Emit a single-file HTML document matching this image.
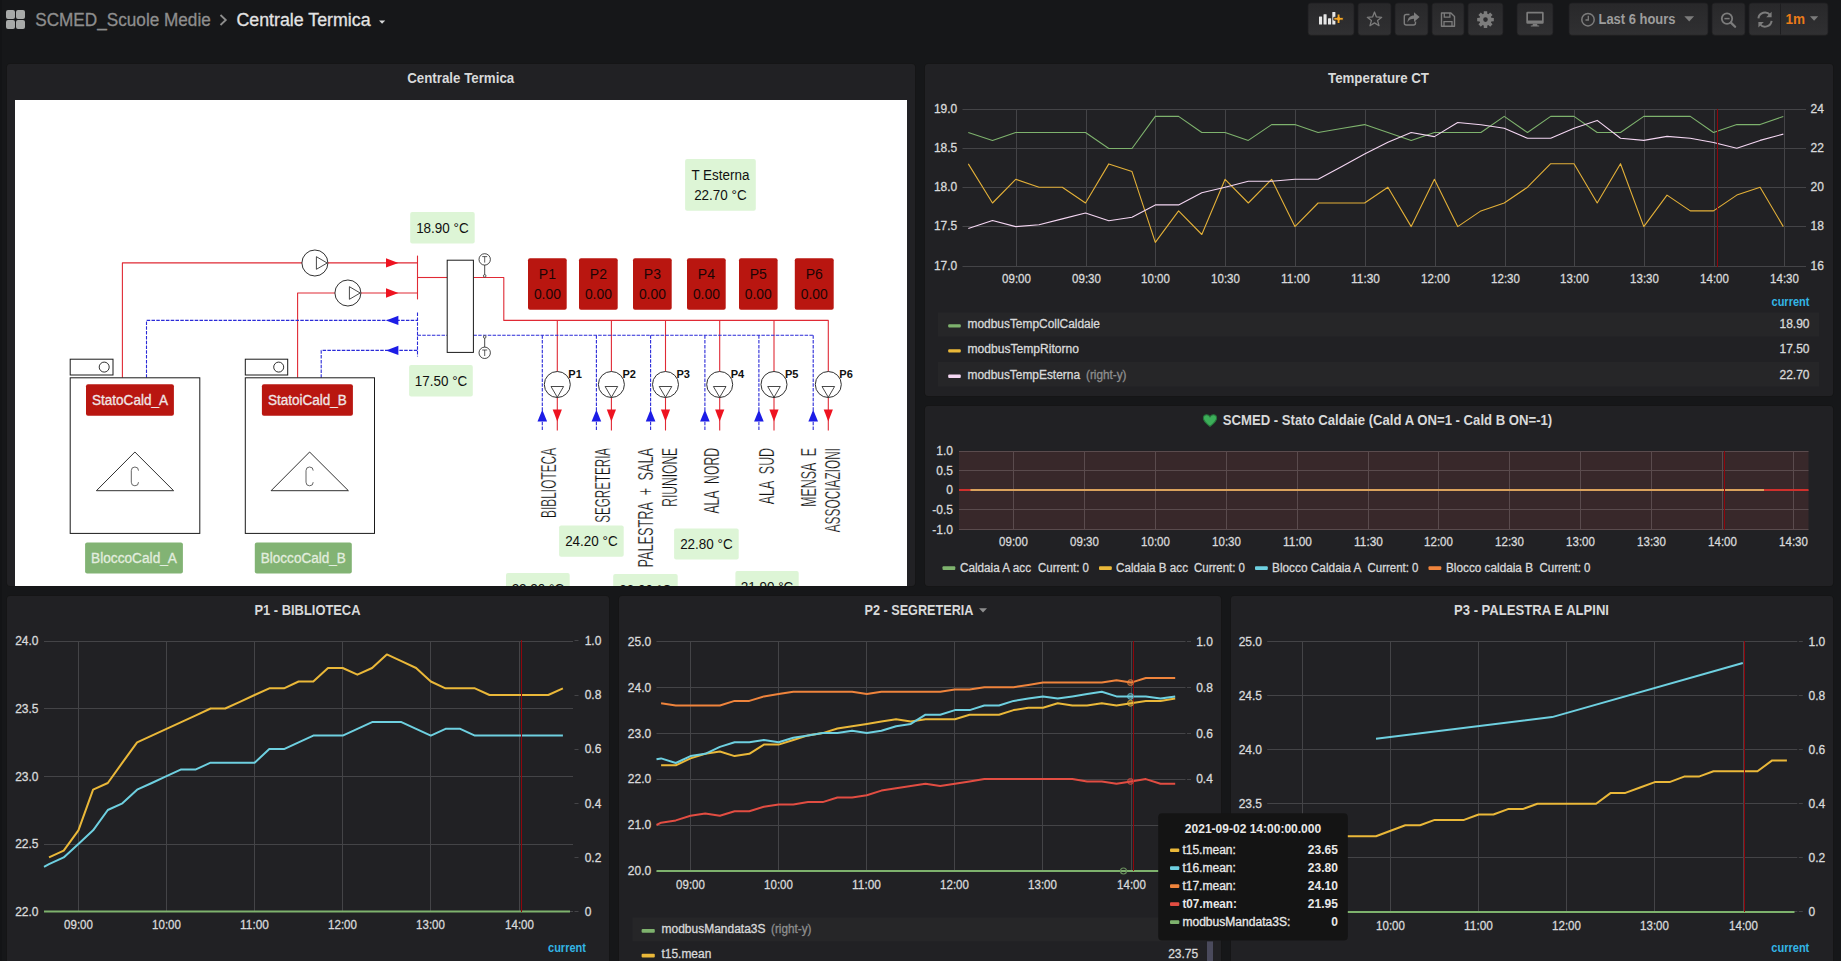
<!DOCTYPE html>
<html><head><meta charset="utf-8"><title>Centrale Termica - Grafana</title>
<style>html,body{margin:0;padding:0;background:#161719;overflow:hidden}svg{display:block}text{font-family:"Liberation Sans",sans-serif}</style>
</head><body>
<svg width="1841" height="961" viewBox="0 0 1841 961">
<rect width="1841" height="961" fill="#161719"/>
<defs><clipPath id="scclip"><rect x="15" y="100" width="892" height="486"/></clipPath></defs>
<rect x="0.0" y="0.0" width="2.0" height="961.0" fill="#131416" />
<rect x="6.0" y="10.0" width="9.0" height="8.9" fill="#a7a9a8" rx="2" />
<rect x="16.0" y="10.0" width="9.0" height="8.9" fill="#a7a9a8" rx="2" />
<rect x="6.0" y="20.0" width="9.0" height="8.9" fill="#a7a9a8" rx="2" />
<rect x="16.0" y="20.0" width="9.0" height="8.9" fill="#a7a9a8" rx="2" />
<text x="35.2" y="25.8" font-size="18" fill="#8e8e8e" textLength="175.6" lengthAdjust="spacingAndGlyphs" stroke="#8e8e8e" stroke-width="0.3" >SCMED_Scuole Medie</text>
<path d="M220.5 15 L225.8 20 L220.5 25" fill="none" stroke="#8e8e8e" stroke-width="1.8"/>
<text x="236.4" y="25.8" font-size="18" fill="#e3e3e3" textLength="134.2" lengthAdjust="spacingAndGlyphs" stroke="#e3e3e3" stroke-width="0.3" >Centrale Termica</text>
<path d="M379 20.6 L385.2 20.6 L382.1 23.8 Z" fill="#d8d9da"/>
<defs><linearGradient id="bg" x1="0" y1="0" x2="0" y2="1"><stop offset="0" stop-color="#28282a"/><stop offset="1" stop-color="#303032"/></linearGradient></defs>
<rect x="1308.0" y="3.0" width="46.0" height="32.3" fill="url(#bg)" rx="3" stroke="#1f1f21" stroke-width="0.8"/>
<rect x="1358.0" y="3.0" width="33.0" height="32.3" fill="url(#bg)" rx="3" stroke="#1f1f21" stroke-width="0.8"/>
<rect x="1395.0" y="3.0" width="33.0" height="32.3" fill="url(#bg)" rx="3" stroke="#1f1f21" stroke-width="0.8"/>
<rect x="1432.0" y="3.0" width="32.0" height="32.3" fill="url(#bg)" rx="3" stroke="#1f1f21" stroke-width="0.8"/>
<rect x="1468.0" y="3.0" width="35.0" height="32.3" fill="url(#bg)" rx="3" stroke="#1f1f21" stroke-width="0.8"/>
<rect x="1517.0" y="3.0" width="36.0" height="32.3" fill="url(#bg)" rx="3" stroke="#1f1f21" stroke-width="0.8"/>
<rect x="1569.0" y="3.0" width="139.0" height="32.3" fill="url(#bg)" rx="3" stroke="#1f1f21" stroke-width="0.8"/>
<rect x="1712.0" y="3.0" width="33.0" height="32.3" fill="url(#bg)" rx="3" stroke="#1f1f21" stroke-width="0.8"/>
<rect x="1749.0" y="3.0" width="79.0" height="32.3" fill="url(#bg)" rx="3" stroke="#1f1f21" stroke-width="0.8"/>
<line x1="1780.5" y1="3.5" x2="1780.5" y2="34.5" stroke="#1e1e20" stroke-width="1" />
<rect x="1319.0" y="16.6" width="3.1" height="8.0" fill="#e6e6e6" rx="0.5" />
<rect x="1323.5" y="14.2" width="3.1" height="10.4" fill="#e6e6e6" rx="0.5" />
<rect x="1328.0" y="18.3" width="3.1" height="6.3" fill="#e6e6e6" rx="0.5" />
<rect x="1332.3" y="12.0" width="3.1" height="12.6" fill="#e6e6e6" rx="0.5" />
<path d="M1333.8 17.3 h3.3 v-3.3 h2.9 v3.3 h3.3 v2.9 h-3.3 v3.3 h-2.9 v-3.3 h-3.3 z" fill="#f5a623" stroke="#29292b" stroke-width="1"/>
<polygon points="1374.5,12.0 1376.4,16.9 1381.7,17.3 1377.6,20.6 1379.0,25.7 1374.5,22.9 1370.0,25.7 1371.4,20.6 1367.3,17.3 1372.6,16.9" fill="none" stroke="#7c7c7c" stroke-width="1.3" stroke-linejoin="round"/>
<path d="M1409.5 14.5 h-3.2 a2 2 0 0 0 -2 2 v6.5 a2 2 0 0 0 2 2 h7.2 a2 2 0 0 0 2 -2 v-1.5" fill="none" stroke="#7c7c7c" stroke-width="1.4"/>
<path d="M1407.5 22.5 c0.2 -5 2.8 -7 6.5 -7 v-3.3 l5.6 4.9 l-5.6 4.9 v-3.2 c-3 0 -4.9 0.7 -6.5 3.7 z" fill="#7c7c7c"/>
<path d="M1441.5 13 h9.4 l3.6 3.6 v9.6 h-13 z" fill="none" stroke="#7c7c7c" stroke-width="1.4" stroke-linejoin="round"/>
<path d="M1444.3 13 v4.2 h5.6 v-4.2" fill="none" stroke="#7c7c7c" stroke-width="1.3"/>
<path d="M1444 26.2 v-4.6 h8 v4.6" fill="none" stroke="#7c7c7c" stroke-width="1.3"/>
<path d="M1483.70 13.77 L1483.81 11.27 L1487.19 11.27 L1487.30 13.77 L1488.35 14.20 L1490.20 12.52 L1492.58 14.90 L1490.90 16.75 L1491.33 17.80 L1493.83 17.91 L1493.83 21.29 L1491.33 21.40 L1490.90 22.45 L1492.58 24.30 L1490.20 26.68 L1488.35 25.00 L1487.30 25.43 L1487.19 27.93 L1483.81 27.93 L1483.70 25.43 L1482.65 25.00 L1480.80 26.68 L1478.42 24.30 L1480.10 22.45 L1479.67 21.40 L1477.17 21.29 L1477.17 17.91 L1479.67 17.80 L1480.10 16.75 L1478.42 14.90 L1480.80 12.52 L1482.65 14.20 Z M1487.80 19.60 a2.3 2.3 0 1 0 -4.6 0 a2.3 2.3 0 1 0 4.6 0 Z" fill="#7c7c7c" fill-rule="evenodd"/>
<path d="M1527.5 11.8 h15 a1.2 1.2 0 0 1 1.2 1.2 v9.6 a1.2 1.2 0 0 1 -1.2 1.2 h-15 a1.2 1.2 0 0 1 -1.2 -1.2 v-9.6 a1.2 1.2 0 0 1 1.2 -1.2 z M1528 13.6 v7 h14 v-7 z" fill="#7c7c7c" fill-rule="evenodd"/>
<path d="M1533 23.8 h4 l0.6 1.6 h1.6 v1 h-8.4 v-1 h1.6 z" fill="#7c7c7c"/>
<circle cx="1588" cy="19.7" r="6.2" fill="none" stroke="#7c7c7c" stroke-width="1.5"/>
<path d="M1588.3 15.8 v4.2 h-2.8" fill="none" stroke="#7c7c7c" stroke-width="1.3"/>
<text x="1598.5" y="24.0" font-size="14" fill="#9d9d9d" font-weight="bold" textLength="77.0" lengthAdjust="spacingAndGlyphs" >Last 6 hours</text>
<path d="M1684.3 16.2 h9.8 l-4.9 5.2 z" fill="#7c7c7c"/>
<circle cx="1727" cy="18.6" r="5.2" fill="none" stroke="#7c7c7c" stroke-width="1.8"/>
<path d="M1724.4 18.6 h5.2" stroke="#7c7c7c" stroke-width="1.5"/>
<path d="M1730.9 22.6 l4.2 4.2" stroke="#7c7c7c" stroke-width="2.3" stroke-linecap="round"/>
<path d="M1758.4 18.4 a6.6 6.6 0 0 1 11.8 -3.2" fill="none" stroke="#7c7c7c" stroke-width="2"/>
<path d="M1771.6 11.8 v5.4 h-5.4 z" fill="#7c7c7c"/>
<path d="M1771.6 20.8 a6.6 6.6 0 0 1 -11.8 3.2" fill="none" stroke="#7c7c7c" stroke-width="2"/>
<path d="M1758.4 27.4 v-5.4 h5.4 z" fill="#7c7c7c"/>
<text x="1785.6" y="24.0" font-size="14" fill="#eb7b18" font-weight="bold" textLength="19.5" lengthAdjust="spacingAndGlyphs" >1m</text>
<path d="M1810 16.2 h8.2 l-4.1 4.6 z" fill="#7c7c7c"/>
<rect x="6.5" y="63.5" width="909" height="523" rx="3.5" fill="#141414"/>
<rect x="7.0" y="64.0" width="908.0" height="522.0" fill="#212124" rx="3" />
<rect x="924.5" y="63.5" width="909" height="333" rx="3.5" fill="#141414"/>
<rect x="925.0" y="64.0" width="908.0" height="332.0" fill="#212124" rx="3" />
<rect x="924.5" y="405.5" width="909" height="181" rx="3.5" fill="#141414"/>
<rect x="925.0" y="406.0" width="908.0" height="180.0" fill="#212124" rx="3" />
<rect x="6.5" y="595.5" width="603" height="385" rx="3.5" fill="#141414"/>
<rect x="7.0" y="596.0" width="602.0" height="384.0" fill="#212124" rx="3" />
<rect x="618.5" y="595.5" width="603" height="385" rx="3.5" fill="#141414"/>
<rect x="619.0" y="596.0" width="602.0" height="384.0" fill="#212124" rx="3" />
<rect x="1230.5" y="595.5" width="603" height="385" rx="3.5" fill="#141414"/>
<rect x="1231.0" y="596.0" width="602.0" height="384.0" fill="#212124" rx="3" />
<text x="460.7" y="83.3" font-size="14" fill="#d8d9da" text-anchor="middle" font-weight="bold" textLength="107.0" lengthAdjust="spacingAndGlyphs" >Centrale Termica</text>
<text x="1378.5" y="83.3" font-size="14" fill="#d8d9da" text-anchor="middle" font-weight="bold" textLength="101.0" lengthAdjust="spacingAndGlyphs" >Temperature CT</text>
<g clip-path="url(#scclip)">
<rect x="15.0" y="100.0" width="892.0" height="486.0" fill="#ffffff" />
<polyline points="122.4,377.8 122.4,262.9 417.5,262.9" fill="none" stroke="#e02a35" stroke-width="1.1" stroke-linejoin="round" stroke-linejoin="miter"/>
<polyline points="297.6,377.8 297.6,293.0 417.5,293.0" fill="none" stroke="#e02a35" stroke-width="1.1" stroke-linejoin="round" stroke-linejoin="miter"/>
<polyline points="417.5,255.6 417.5,299.4" fill="none" stroke="#e02a35" stroke-width="1.1" stroke-linejoin="round" stroke-linejoin="miter"/>
<polyline points="417.5,277.5 447.2,277.5" fill="none" stroke="#e02a35" stroke-width="1.1" stroke-linejoin="round" stroke-linejoin="miter"/>
<polyline points="473.4,277.5 503.8,277.5 503.8,320.4 828.3,320.4 828.3,371.5" fill="none" stroke="#e02a35" stroke-width="1.1" stroke-linejoin="round" stroke-linejoin="miter"/>
<polyline points="557.3,320.4 557.3,371.5" fill="none" stroke="#e02a35" stroke-width="1.1" stroke-linejoin="round" stroke-linejoin="miter"/>
<polyline points="611.4,320.4 611.4,371.5" fill="none" stroke="#e02a35" stroke-width="1.1" stroke-linejoin="round" stroke-linejoin="miter"/>
<polyline points="665.5,320.4 665.5,371.5" fill="none" stroke="#e02a35" stroke-width="1.1" stroke-linejoin="round" stroke-linejoin="miter"/>
<polyline points="719.7,320.4 719.7,371.5" fill="none" stroke="#e02a35" stroke-width="1.1" stroke-linejoin="round" stroke-linejoin="miter"/>
<polyline points="774.0,320.4 774.0,371.5" fill="none" stroke="#e02a35" stroke-width="1.1" stroke-linejoin="round" stroke-linejoin="miter"/>
<polyline points="557.3,397.5 557.3,430.5" fill="none" stroke="#e02a35" stroke-width="1.1" stroke-linejoin="round" stroke-linejoin="miter"/>
<path d="M552.7 409.6 h9.2 l-4.6 11.8 z" fill="#ee1320"/>
<polyline points="611.4,397.5 611.4,430.5" fill="none" stroke="#e02a35" stroke-width="1.1" stroke-linejoin="round" stroke-linejoin="miter"/>
<path d="M606.8 409.6 h9.2 l-4.6 11.8 z" fill="#ee1320"/>
<polyline points="665.5,397.5 665.5,430.5" fill="none" stroke="#e02a35" stroke-width="1.1" stroke-linejoin="round" stroke-linejoin="miter"/>
<path d="M660.9 409.6 h9.2 l-4.6 11.8 z" fill="#ee1320"/>
<polyline points="719.7,397.5 719.7,430.5" fill="none" stroke="#e02a35" stroke-width="1.1" stroke-linejoin="round" stroke-linejoin="miter"/>
<path d="M715.1 409.6 h9.2 l-4.6 11.8 z" fill="#ee1320"/>
<polyline points="774.0,397.5 774.0,430.5" fill="none" stroke="#e02a35" stroke-width="1.1" stroke-linejoin="round" stroke-linejoin="miter"/>
<path d="M769.4 409.6 h9.2 l-4.6 11.8 z" fill="#ee1320"/>
<polyline points="828.3,397.5 828.3,430.5" fill="none" stroke="#e02a35" stroke-width="1.1" stroke-linejoin="round" stroke-linejoin="miter"/>
<path d="M823.7 409.6 h9.2 l-4.6 11.8 z" fill="#ee1320"/>
<path d="M386 258.2 v9.4 l12.4 -4.7 z" fill="#ee1320"/>
<path d="M386 288.3 v9.4 l12.4 -4.7 z" fill="#ee1320"/>
<polyline points="146.5,377.8 146.5,320.4 417.5,320.4" fill="none" stroke="#2a2ad8" stroke-width="1.1" stroke-linejoin="round" stroke-dasharray="3.5 1.3" stroke-linejoin="miter"/>
<polyline points="321.2,377.8 321.2,350.4 417.5,350.4" fill="none" stroke="#2a2ad8" stroke-width="1.1" stroke-linejoin="round" stroke-dasharray="3.5 1.3" stroke-linejoin="miter"/>
<polyline points="417.5,312.6 417.5,356.6" fill="none" stroke="#2a2ad8" stroke-width="1.1" stroke-linejoin="round" stroke-dasharray="3.5 1.3" stroke-linejoin="miter"/>
<polyline points="417.5,335.3 447.2,335.3" fill="none" stroke="#2a2ad8" stroke-width="1.1" stroke-linejoin="round" stroke-dasharray="3.5 1.3" stroke-linejoin="miter"/>
<polyline points="473.4,335.3 813.2,335.3" fill="none" stroke="#2a2ad8" stroke-width="1.1" stroke-linejoin="round" stroke-dasharray="3.5 1.3" stroke-linejoin="miter"/>
<polyline points="542.3,335.3 542.3,430.5" fill="none" stroke="#2a2ad8" stroke-width="1.1" stroke-linejoin="round" stroke-dasharray="3.5 1.3" stroke-linejoin="miter"/>
<path d="M542.3 409.8 l4.8 11.8 h-9.6 z" fill="#1c1ce6"/>
<polyline points="596.4,335.3 596.4,430.5" fill="none" stroke="#2a2ad8" stroke-width="1.1" stroke-linejoin="round" stroke-dasharray="3.5 1.3" stroke-linejoin="miter"/>
<path d="M596.4 409.8 l4.8 11.8 h-9.6 z" fill="#1c1ce6"/>
<polyline points="650.6,335.3 650.6,430.5" fill="none" stroke="#2a2ad8" stroke-width="1.1" stroke-linejoin="round" stroke-dasharray="3.5 1.3" stroke-linejoin="miter"/>
<path d="M650.6 409.8 l4.8 11.8 h-9.6 z" fill="#1c1ce6"/>
<polyline points="704.9,335.3 704.9,430.5" fill="none" stroke="#2a2ad8" stroke-width="1.1" stroke-linejoin="round" stroke-dasharray="3.5 1.3" stroke-linejoin="miter"/>
<path d="M704.9 409.8 l4.8 11.8 h-9.6 z" fill="#1c1ce6"/>
<polyline points="758.9,335.3 758.9,430.5" fill="none" stroke="#2a2ad8" stroke-width="1.1" stroke-linejoin="round" stroke-dasharray="3.5 1.3" stroke-linejoin="miter"/>
<path d="M758.9 409.8 l4.8 11.8 h-9.6 z" fill="#1c1ce6"/>
<polyline points="813.2,335.3 813.2,430.5" fill="none" stroke="#2a2ad8" stroke-width="1.1" stroke-linejoin="round" stroke-dasharray="3.5 1.3" stroke-linejoin="miter"/>
<path d="M813.2 409.8 l4.8 11.8 h-9.6 z" fill="#1c1ce6"/>
<path d="M398.4 315.7 v9.4 l-12.4 -4.7 z" fill="#1c1ce6"/>
<path d="M398.4 345.7 v9.4 l-12.4 -4.7 z" fill="#1c1ce6"/>
<circle cx="314.9" cy="263" r="13" fill="#fff" stroke="#1a1a1a" stroke-width="0.9"/>
<path d="M316.4 256.7 v12.6 l10.8 -6.3 z" fill="none" stroke="#1a1a1a" stroke-width="0.8"/>
<circle cx="347.9" cy="293" r="13" fill="#fff" stroke="#1a1a1a" stroke-width="0.9"/>
<path d="M349.4 286.7 v12.6 l10.8 -6.3 z" fill="none" stroke="#1a1a1a" stroke-width="0.8"/>
<circle cx="557.3" cy="384.5" r="13" fill="#fff" stroke="#1a1a1a" stroke-width="0.9"/>
<path d="M551.0 386.5 h12.6 l-6.3 10.8 z" fill="none" stroke="#1a1a1a" stroke-width="0.8"/>
<text x="568.3" y="377.6" font-size="10" fill="#111" font-weight="bold" textLength="13.5" lengthAdjust="spacingAndGlyphs" >P1</text>
<circle cx="611.4" cy="384.5" r="13" fill="#fff" stroke="#1a1a1a" stroke-width="0.9"/>
<path d="M605.1 386.5 h12.6 l-6.3 10.8 z" fill="none" stroke="#1a1a1a" stroke-width="0.8"/>
<text x="622.4" y="377.6" font-size="10" fill="#111" font-weight="bold" textLength="13.5" lengthAdjust="spacingAndGlyphs" >P2</text>
<circle cx="665.5" cy="384.5" r="13" fill="#fff" stroke="#1a1a1a" stroke-width="0.9"/>
<path d="M659.2 386.5 h12.6 l-6.3 10.8 z" fill="none" stroke="#1a1a1a" stroke-width="0.8"/>
<text x="676.5" y="377.6" font-size="10" fill="#111" font-weight="bold" textLength="13.5" lengthAdjust="spacingAndGlyphs" >P3</text>
<circle cx="719.7" cy="384.5" r="13" fill="#fff" stroke="#1a1a1a" stroke-width="0.9"/>
<path d="M713.4 386.5 h12.6 l-6.3 10.8 z" fill="none" stroke="#1a1a1a" stroke-width="0.8"/>
<text x="730.7" y="377.6" font-size="10" fill="#111" font-weight="bold" textLength="13.5" lengthAdjust="spacingAndGlyphs" >P4</text>
<circle cx="774.0" cy="384.5" r="13" fill="#fff" stroke="#1a1a1a" stroke-width="0.9"/>
<path d="M767.7 386.5 h12.6 l-6.3 10.8 z" fill="none" stroke="#1a1a1a" stroke-width="0.8"/>
<text x="785.0" y="377.6" font-size="10" fill="#111" font-weight="bold" textLength="13.5" lengthAdjust="spacingAndGlyphs" >P5</text>
<circle cx="828.3" cy="384.5" r="13" fill="#fff" stroke="#1a1a1a" stroke-width="0.9"/>
<path d="M822.0 386.5 h12.6 l-6.3 10.8 z" fill="none" stroke="#1a1a1a" stroke-width="0.8"/>
<text x="839.3" y="377.6" font-size="10" fill="#111" font-weight="bold" textLength="13.5" lengthAdjust="spacingAndGlyphs" >P6</text>
<rect x="447.2" y="260.2" width="26.2" height="92.2" fill="#fff" stroke="#1a1a1a" stroke-width="1"/>
<circle cx="484.7" cy="259.4" r="5.7" fill="#fff" stroke="#1a1a1a" stroke-width="0.8"/>
<line x1="484.7" y1="265.1" x2="484.7" y2="276.0" stroke="#1a1a1a" stroke-width="0.8" />
<circle cx="484.7" cy="275.9" r="1.3" fill="#fff" stroke="#1a1a1a" stroke-width="0.7"/>
<path d="M482.2 256.6 h5 M484.7 256.6 v6" stroke="#1a1a1a" stroke-width="0.7" fill="none"/>
<circle cx="484.7" cy="352.8" r="5.7" fill="#fff" stroke="#1a1a1a" stroke-width="0.8"/>
<line x1="484.7" y1="347.1" x2="484.7" y2="336.8" stroke="#1a1a1a" stroke-width="0.8" />
<circle cx="484.7" cy="336.9" r="1.3" fill="#fff" stroke="#1a1a1a" stroke-width="0.7"/>
<path d="M482.2 350.0 h5 M484.7 350.0 v6" stroke="#1a1a1a" stroke-width="0.7" fill="none"/>
<rect x="70.2" y="377.8" width="129.6" height="155.6" fill="#fff" stroke="#1a1a1a" stroke-width="1"/>
<rect x="70.2" y="359.2" width="42.8" height="15.8" fill="#fff" stroke="#1a1a1a" stroke-width="1"/>
<circle cx="104.2" cy="367.1" r="5" fill="#fff" stroke="#1a1a1a" stroke-width="0.9"/>
<path d="M134.9 452 L173.6 490.7 H96.4 Z" fill="none" stroke="#1a1a1a" stroke-width="0.9"/>
<path d="M138.5 470.6 a3.6 3.6 0 0 0 -7.2 0 v11.6 a3.6 3.6 0 0 0 7.2 0" fill="none" stroke="#555" stroke-width="0.9"/>
<rect x="245.3" y="377.8" width="129.2" height="155.6" fill="#fff" stroke="#1a1a1a" stroke-width="1"/>
<rect x="245.3" y="359.2" width="42.4" height="15.8" fill="#fff" stroke="#1a1a1a" stroke-width="1"/>
<circle cx="278.7" cy="367.1" r="5" fill="#fff" stroke="#1a1a1a" stroke-width="0.9"/>
<path d="M309.6 452 L348.4 490.7 H271.1 Z" fill="none" stroke="#1a1a1a" stroke-width="0.9"/>
<path d="M313.2 470.6 a3.6 3.6 0 0 0 -7.2 0 v11.6 a3.6 3.6 0 0 0 7.2 0" fill="none" stroke="#555" stroke-width="0.9"/>
<rect x="86.0" y="384.2" width="87.9" height="31.5" fill="#b91610" rx="2" />
<text x="130.0" y="404.8" font-size="14" fill="#f0e6e6" text-anchor="middle" textLength="76.0" lengthAdjust="spacingAndGlyphs" stroke="#f0e6e6" stroke-width="0.3" >StatoCald_A</text>
<rect x="261.9" y="384.2" width="91.0" height="31.5" fill="#b91610" rx="2" />
<text x="307.4" y="404.8" font-size="14" fill="#f0e6e6" text-anchor="middle" textLength="79.0" lengthAdjust="spacingAndGlyphs" stroke="#f0e6e6" stroke-width="0.3" >StatoiCald_B</text>
<rect x="85.1" y="542.4" width="97.8" height="31.2" fill="#82b374" rx="2" />
<text x="134.0" y="562.8" font-size="14" fill="#e2eddf" text-anchor="middle" textLength="86.0" lengthAdjust="spacingAndGlyphs" stroke="#e2eddf" stroke-width="0.3" >BloccoCald_A</text>
<rect x="254.8" y="542.4" width="97.0" height="31.2" fill="#82b374" rx="2" />
<text x="303.3" y="562.8" font-size="14" fill="#e2eddf" text-anchor="middle" textLength="85.0" lengthAdjust="spacingAndGlyphs" stroke="#e2eddf" stroke-width="0.3" >BloccoCald_B</text>
<rect x="528.0" y="258.3" width="38.7" height="51.4" fill="#b91610" rx="2" />
<text x="547.4" y="278.8" font-size="14" fill="#1b0505" text-anchor="middle" >P1</text>
<text x="547.4" y="299.0" font-size="14" fill="#1b0505" text-anchor="middle" textLength="27.0" lengthAdjust="spacingAndGlyphs" >0.00</text>
<rect x="579.0" y="258.3" width="38.7" height="51.4" fill="#b91610" rx="2" />
<text x="598.4" y="278.8" font-size="14" fill="#1b0505" text-anchor="middle" >P2</text>
<text x="598.4" y="299.0" font-size="14" fill="#1b0505" text-anchor="middle" textLength="27.0" lengthAdjust="spacingAndGlyphs" >0.00</text>
<rect x="633.0" y="258.3" width="38.7" height="51.4" fill="#b91610" rx="2" />
<text x="652.4" y="278.8" font-size="14" fill="#1b0505" text-anchor="middle" >P3</text>
<text x="652.4" y="299.0" font-size="14" fill="#1b0505" text-anchor="middle" textLength="27.0" lengthAdjust="spacingAndGlyphs" >0.00</text>
<rect x="687.0" y="258.3" width="38.7" height="51.4" fill="#b91610" rx="2" />
<text x="706.4" y="278.8" font-size="14" fill="#1b0505" text-anchor="middle" >P4</text>
<text x="706.4" y="299.0" font-size="14" fill="#1b0505" text-anchor="middle" textLength="27.0" lengthAdjust="spacingAndGlyphs" >0.00</text>
<rect x="739.0" y="258.3" width="38.6" height="51.4" fill="#b91610" rx="2" />
<text x="758.3" y="278.8" font-size="14" fill="#1b0505" text-anchor="middle" >P5</text>
<text x="758.3" y="299.0" font-size="14" fill="#1b0505" text-anchor="middle" textLength="27.0" lengthAdjust="spacingAndGlyphs" >0.00</text>
<rect x="794.8" y="258.3" width="38.9" height="51.4" fill="#b91610" rx="2" />
<text x="814.2" y="278.8" font-size="14" fill="#1b0505" text-anchor="middle" >P6</text>
<text x="814.2" y="299.0" font-size="14" fill="#1b0505" text-anchor="middle" textLength="27.0" lengthAdjust="spacingAndGlyphs" >0.00</text>
<rect x="410.2" y="211.9" width="64.5" height="31.6" fill="#ddf5d6" rx="2" />
<text x="442.4" y="232.7" font-size="14" fill="#111" text-anchor="middle" textLength="52.5" lengthAdjust="spacingAndGlyphs" >18.90 °C</text>
<rect x="409.1" y="365.0" width="63.7" height="31.5" fill="#ddf5d6" rx="2" />
<text x="441.0" y="385.8" font-size="14" fill="#111" text-anchor="middle" textLength="52.5" lengthAdjust="spacingAndGlyphs" >17.50 °C</text>
<rect x="685.1" y="159.0" width="70.7" height="51.7" fill="#ddf5d6" rx="2" />
<text x="720.4" y="180.2" font-size="14" fill="#111" text-anchor="middle" textLength="58.0" lengthAdjust="spacingAndGlyphs" >T Esterna</text>
<text x="720.4" y="200.1" font-size="14" fill="#111" text-anchor="middle" textLength="52.5" lengthAdjust="spacingAndGlyphs" >22.70 °C</text>
<rect x="559.1" y="525.4" width="64.6" height="31.4" fill="#ddf5d6" rx="2" />
<text x="591.4" y="546.1" font-size="14" fill="#111" text-anchor="middle" textLength="52.5" lengthAdjust="spacingAndGlyphs" >24.20 °C</text>
<rect x="674.1" y="528.4" width="64.6" height="31.1" fill="#ddf5d6" rx="2" />
<text x="706.4" y="549.0" font-size="14" fill="#111" text-anchor="middle" textLength="52.5" lengthAdjust="spacingAndGlyphs" >22.80 °C</text>
<rect x="506.0" y="573.0" width="63.7" height="31.5" fill="#ddf5d6" rx="2" />
<text x="537.9" y="593.8" font-size="14" fill="#111" text-anchor="middle" textLength="52.5" lengthAdjust="spacingAndGlyphs" >22.20 °C</text>
<rect x="613.2" y="574.0" width="64.5" height="31.5" fill="#ddf5d6" rx="2" />
<text x="645.5" y="594.8" font-size="14" fill="#111" text-anchor="middle" textLength="52.5" lengthAdjust="spacingAndGlyphs" >23.00 °C</text>
<rect x="735.4" y="571.0" width="63.3" height="31.5" fill="#ddf5d6" rx="2" />
<text x="767.0" y="591.8" font-size="14" fill="#111" text-anchor="middle" textLength="52.5" lengthAdjust="spacingAndGlyphs" >21.90 °C</text>
<text transform="translate(555.7,517.9) rotate(-90)" font-size="22.5" fill="#111" textLength="70.0" lengthAdjust="spacingAndGlyphs" word-spacing="7" stroke="#fff" stroke-width="0.35">BIBLIOTECA</text>
<text transform="translate(610.2,522.7) rotate(-90)" font-size="22.5" fill="#111" textLength="74.8" lengthAdjust="spacingAndGlyphs" word-spacing="7" stroke="#fff" stroke-width="0.35">SEGRETERIA</text>
<text transform="translate(652.8,567.6) rotate(-90)" font-size="22.5" fill="#111" textLength="119.7" lengthAdjust="spacingAndGlyphs" word-spacing="7" stroke="#fff" stroke-width="0.35">PALESTRA + SALA</text>
<text transform="translate(676.7,506.7) rotate(-90)" font-size="22.5" fill="#111" textLength="58.8" lengthAdjust="spacingAndGlyphs" word-spacing="7" stroke="#fff" stroke-width="0.35">RIUNIONE</text>
<text transform="translate(718.9,513.6) rotate(-90)" font-size="22.5" fill="#111" textLength="65.7" lengthAdjust="spacingAndGlyphs" word-spacing="7" stroke="#fff" stroke-width="0.35">ALA NORD</text>
<text transform="translate(773.5,504.3) rotate(-90)" font-size="22.5" fill="#111" textLength="56.4" lengthAdjust="spacingAndGlyphs" word-spacing="7" stroke="#fff" stroke-width="0.35">ALA SUD</text>
<text transform="translate(816.1,506.7) rotate(-90)" font-size="22.5" fill="#111" textLength="58.8" lengthAdjust="spacingAndGlyphs" word-spacing="7" stroke="#fff" stroke-width="0.35">MENSA E</text>
<text transform="translate(839.6,532.3) rotate(-90)" font-size="22.5" fill="#111" textLength="84.4" lengthAdjust="spacingAndGlyphs" word-spacing="7" stroke="#fff" stroke-width="0.35">ASSOCIAZIONI</text>
</g>
<line x1="962.5" y1="109.5" x2="1806.0" y2="109.5" stroke="#444447" stroke-width="1" />
<line x1="962.5" y1="148.5" x2="1806.0" y2="148.5" stroke="#444447" stroke-width="1" />
<line x1="962.5" y1="187.5" x2="1806.0" y2="187.5" stroke="#444447" stroke-width="1" />
<line x1="962.5" y1="226.5" x2="1806.0" y2="226.5" stroke="#444447" stroke-width="1" />
<line x1="962.5" y1="266.5" x2="1806.0" y2="266.5" stroke="#444447" stroke-width="1" />
<line x1="1016.5" y1="109.0" x2="1016.5" y2="267.0" stroke="#444447" stroke-width="1" />
<line x1="1086.5" y1="109.0" x2="1086.5" y2="267.0" stroke="#444447" stroke-width="1" />
<line x1="1155.5" y1="109.0" x2="1155.5" y2="267.0" stroke="#444447" stroke-width="1" />
<line x1="1225.5" y1="109.0" x2="1225.5" y2="267.0" stroke="#444447" stroke-width="1" />
<line x1="1295.5" y1="109.0" x2="1295.5" y2="267.0" stroke="#444447" stroke-width="1" />
<line x1="1365.5" y1="109.0" x2="1365.5" y2="267.0" stroke="#444447" stroke-width="1" />
<line x1="1435.5" y1="109.0" x2="1435.5" y2="267.0" stroke="#444447" stroke-width="1" />
<line x1="1505.5" y1="109.0" x2="1505.5" y2="267.0" stroke="#444447" stroke-width="1" />
<line x1="1574.5" y1="109.0" x2="1574.5" y2="267.0" stroke="#444447" stroke-width="1" />
<line x1="1644.5" y1="109.0" x2="1644.5" y2="267.0" stroke="#444447" stroke-width="1" />
<line x1="1714.5" y1="109.0" x2="1714.5" y2="267.0" stroke="#444447" stroke-width="1" />
<line x1="1784.5" y1="109.0" x2="1784.5" y2="267.0" stroke="#444447" stroke-width="1" />
<text x="957.3" y="112.7" font-size="12" fill="#d8d9da" text-anchor="end" stroke="#d8d9da" stroke-width="0.3" >19.0</text>
<text x="1810.5" y="112.7" font-size="12" fill="#d8d9da" stroke="#d8d9da" stroke-width="0.3" >24</text>
<text x="957.3" y="152.0" font-size="12" fill="#d8d9da" text-anchor="end" stroke="#d8d9da" stroke-width="0.3" >18.5</text>
<text x="1810.5" y="152.0" font-size="12" fill="#d8d9da" stroke="#d8d9da" stroke-width="0.3" >22</text>
<text x="957.3" y="191.0" font-size="12" fill="#d8d9da" text-anchor="end" stroke="#d8d9da" stroke-width="0.3" >18.0</text>
<text x="1810.5" y="191.0" font-size="12" fill="#d8d9da" stroke="#d8d9da" stroke-width="0.3" >20</text>
<text x="957.3" y="229.9" font-size="12" fill="#d8d9da" text-anchor="end" stroke="#d8d9da" stroke-width="0.3" >17.5</text>
<text x="1810.5" y="229.9" font-size="12" fill="#d8d9da" stroke="#d8d9da" stroke-width="0.3" >18</text>
<text x="957.3" y="269.8" font-size="12" fill="#d8d9da" text-anchor="end" stroke="#d8d9da" stroke-width="0.3" >17.0</text>
<text x="1810.5" y="269.8" font-size="12" fill="#d8d9da" stroke="#d8d9da" stroke-width="0.3" >16</text>
<text x="1016.5" y="283.3" font-size="12" fill="#d8d9da" text-anchor="middle" textLength="28.8" lengthAdjust="spacingAndGlyphs" stroke="#d8d9da" stroke-width="0.3" >09:00</text>
<text x="1086.5" y="283.3" font-size="12" fill="#d8d9da" text-anchor="middle" textLength="28.8" lengthAdjust="spacingAndGlyphs" stroke="#d8d9da" stroke-width="0.3" >09:30</text>
<text x="1155.5" y="283.3" font-size="12" fill="#d8d9da" text-anchor="middle" textLength="28.8" lengthAdjust="spacingAndGlyphs" stroke="#d8d9da" stroke-width="0.3" >10:00</text>
<text x="1225.5" y="283.3" font-size="12" fill="#d8d9da" text-anchor="middle" textLength="28.8" lengthAdjust="spacingAndGlyphs" stroke="#d8d9da" stroke-width="0.3" >10:30</text>
<text x="1295.5" y="283.3" font-size="12" fill="#d8d9da" text-anchor="middle" textLength="28.8" lengthAdjust="spacingAndGlyphs" stroke="#d8d9da" stroke-width="0.3" >11:00</text>
<text x="1365.5" y="283.3" font-size="12" fill="#d8d9da" text-anchor="middle" textLength="28.8" lengthAdjust="spacingAndGlyphs" stroke="#d8d9da" stroke-width="0.3" >11:30</text>
<text x="1435.5" y="283.3" font-size="12" fill="#d8d9da" text-anchor="middle" textLength="28.8" lengthAdjust="spacingAndGlyphs" stroke="#d8d9da" stroke-width="0.3" >12:00</text>
<text x="1505.5" y="283.3" font-size="12" fill="#d8d9da" text-anchor="middle" textLength="28.8" lengthAdjust="spacingAndGlyphs" stroke="#d8d9da" stroke-width="0.3" >12:30</text>
<text x="1574.5" y="283.3" font-size="12" fill="#d8d9da" text-anchor="middle" textLength="28.8" lengthAdjust="spacingAndGlyphs" stroke="#d8d9da" stroke-width="0.3" >13:00</text>
<text x="1644.5" y="283.3" font-size="12" fill="#d8d9da" text-anchor="middle" textLength="28.8" lengthAdjust="spacingAndGlyphs" stroke="#d8d9da" stroke-width="0.3" >13:30</text>
<text x="1714.5" y="283.3" font-size="12" fill="#d8d9da" text-anchor="middle" textLength="28.8" lengthAdjust="spacingAndGlyphs" stroke="#d8d9da" stroke-width="0.3" >14:00</text>
<text x="1784.5" y="283.3" font-size="12" fill="#d8d9da" text-anchor="middle" textLength="28.8" lengthAdjust="spacingAndGlyphs" stroke="#d8d9da" stroke-width="0.3" >14:30</text>
<polyline points="968.3,132.5 992.5,140.4 1015.7,132.5 1039.0,132.5 1062.3,132.5 1085.5,132.5 1108.8,148.5 1132.0,148.5 1155.3,116.4 1178.6,116.4 1201.8,132.5 1225.1,132.5 1248.3,140.4 1271.6,124.6 1294.9,124.6 1318.1,132.5 1341.4,128.5 1364.6,124.6 1387.9,132.5 1411.2,140.4 1434.4,132.5 1457.7,132.5 1480.9,132.5 1504.2,116.4 1527.5,132.5 1550.7,116.4 1574.0,116.4 1597.2,132.5 1620.5,132.5 1643.8,116.4 1667.0,116.4 1690.3,116.4 1713.5,132.5 1736.8,124.6 1760.1,124.6 1783.3,116.4" fill="none" stroke="#7eb26d" stroke-width="1.1" stroke-linejoin="round" />
<polyline points="968.3,163.9 992.5,203.0 1015.7,179.3 1039.0,187.2 1062.3,187.2 1085.5,203.0 1108.8,163.9 1132.0,171.6 1155.3,242.4 1178.6,210.9 1201.8,234.5 1225.1,179.3 1248.3,203.0 1271.6,179.3 1294.9,226.6 1318.1,203.0 1341.4,203.0 1364.6,203.0 1387.9,187.2 1411.2,226.6 1434.4,179.3 1457.7,226.6 1480.9,210.9 1504.2,203.0 1527.5,187.2 1550.7,163.7 1574.0,163.7 1597.2,203.0 1620.5,163.7 1643.8,226.6 1667.0,195.1 1690.3,210.9 1713.5,210.9 1736.8,195.1 1760.1,187.2 1783.3,226.6" fill="none" stroke="#e3b038" stroke-width="1.1" stroke-linejoin="round" />
<polyline points="968.3,228.6 992.5,220.5 1015.7,226.6 1039.0,224.7 1062.3,218.9 1085.5,213.0 1108.8,220.7 1132.0,217.2 1155.3,204.9 1178.6,204.9 1201.8,192.8 1225.1,187.2 1248.3,181.2 1271.6,181.2 1294.9,179.3 1318.1,179.3 1341.4,166.8 1364.6,153.9 1387.9,142.3 1411.2,132.5 1434.4,136.6 1457.7,122.5 1480.9,124.8 1504.2,128.3 1527.5,138.3 1550.7,138.3 1574.0,128.3 1597.2,120.4 1620.5,138.3 1643.8,140.4 1667.0,136.4 1690.3,138.3 1713.5,142.5 1736.8,148.3 1760.1,140.4 1783.3,134.1" fill="none" stroke="#f4d6f2" stroke-width="1.1" stroke-linejoin="round" />
<line x1="1717.5" y1="109.0" x2="1717.5" y2="267.0" stroke="#8e060c" stroke-width="1" />
<text x="1809.5" y="306.3" font-size="12" fill="#33b5e5" text-anchor="end" font-weight="bold" textLength="38.0" lengthAdjust="spacingAndGlyphs" >current</text>
<rect x="938.0" y="312.5" width="881.0" height="24.0" fill="#262628" />
<rect x="938.0" y="362.0" width="881.0" height="24.5" fill="#262628" />
<rect x="948.2" y="324.2" width="12.6" height="3.4" fill="#7eb26d" rx="1" />
<text x="967.5" y="328.3" font-size="12" fill="#d8d9da" textLength="132.5" lengthAdjust="spacingAndGlyphs" stroke="#d8d9da" stroke-width="0.3" >modbusTempCollCaldaie</text>
<text x="1809.5" y="328.3" font-size="12" fill="#d8d9da" text-anchor="end" stroke="#d8d9da" stroke-width="0.3" >18.90</text>
<rect x="948.2" y="349.2" width="12.6" height="3.4" fill="#eab839" rx="1" />
<text x="967.5" y="353.3" font-size="12" fill="#d8d9da" textLength="111.5" lengthAdjust="spacingAndGlyphs" stroke="#d8d9da" stroke-width="0.3" >modbusTempRitorno</text>
<text x="1809.5" y="353.3" font-size="12" fill="#d8d9da" text-anchor="end" stroke="#d8d9da" stroke-width="0.3" >17.50</text>
<rect x="948.2" y="374.5" width="12.6" height="3.4" fill="#f4d6f2" rx="1" />
<text x="967.5" y="378.6" font-size="12" fill="#d8d9da" textLength="112.5" lengthAdjust="spacingAndGlyphs" stroke="#d8d9da" stroke-width="0.3" >modbusTempEsterna</text>
<text x="1086.0" y="378.6" font-size="12" fill="#8e8e8e" textLength="40.5" lengthAdjust="spacingAndGlyphs" stroke="#8e8e8e" stroke-width="0.3" >(right-y)</text>
<text x="1809.5" y="378.6" font-size="12" fill="#d8d9da" text-anchor="end" stroke="#d8d9da" stroke-width="0.3" >22.70</text>
<text x="1387.5" y="425.3" font-size="14" fill="#d8d9da" text-anchor="middle" font-weight="bold" textLength="329.5" lengthAdjust="spacingAndGlyphs" >SCMED - Stato Caldaie (Cald A ON=1 - Cald B ON=-1)</text>
<path d="M1210 426.4 c-4.6 -3.6 -6.6 -5.6 -6.6 -8.2 c0 -2 1.5 -3.4 3.3 -3.4 c1.4 0 2.6 0.8 3.3 2 c0.7 -1.2 1.9 -2 3.3 -2 c1.8 0 3.3 1.4 3.3 3.4 c0 2.6 -2 4.6 -6.6 8.2 z" fill="#3cae59" stroke="#27743b" stroke-width="1.1"/>
<rect x="959.0" y="451.1" width="849.5" height="78.5" fill="#38282a" />
<line x1="959.0" y1="451.5" x2="1808.5" y2="451.5" stroke="#5a4b4d" stroke-width="1" />
<line x1="959.0" y1="470.5" x2="1808.5" y2="470.5" stroke="#5a4b4d" stroke-width="1" />
<line x1="959.0" y1="490.5" x2="1808.5" y2="490.5" stroke="#5a4b4d" stroke-width="1" />
<line x1="959.0" y1="509.5" x2="1808.5" y2="509.5" stroke="#5a4b4d" stroke-width="1" />
<line x1="959.0" y1="529.5" x2="1808.5" y2="529.5" stroke="#5a4b4d" stroke-width="1" />
<line x1="1013.5" y1="451.1" x2="1013.5" y2="529.6" stroke="#5a4b4d" stroke-width="1" />
<line x1="1084.5" y1="451.1" x2="1084.5" y2="529.6" stroke="#5a4b4d" stroke-width="1" />
<line x1="1155.5" y1="451.1" x2="1155.5" y2="529.6" stroke="#5a4b4d" stroke-width="1" />
<line x1="1226.5" y1="451.1" x2="1226.5" y2="529.6" stroke="#5a4b4d" stroke-width="1" />
<line x1="1297.5" y1="451.1" x2="1297.5" y2="529.6" stroke="#5a4b4d" stroke-width="1" />
<line x1="1368.5" y1="451.1" x2="1368.5" y2="529.6" stroke="#5a4b4d" stroke-width="1" />
<line x1="1438.5" y1="451.1" x2="1438.5" y2="529.6" stroke="#5a4b4d" stroke-width="1" />
<line x1="1509.5" y1="451.1" x2="1509.5" y2="529.6" stroke="#5a4b4d" stroke-width="1" />
<line x1="1580.5" y1="451.1" x2="1580.5" y2="529.6" stroke="#5a4b4d" stroke-width="1" />
<line x1="1651.5" y1="451.1" x2="1651.5" y2="529.6" stroke="#5a4b4d" stroke-width="1" />
<line x1="1722.5" y1="451.1" x2="1722.5" y2="529.6" stroke="#5a4b4d" stroke-width="1" />
<line x1="1793.5" y1="451.1" x2="1793.5" y2="529.6" stroke="#5a4b4d" stroke-width="1" />
<text x="953.0" y="455.4" font-size="12" fill="#d8d9da" text-anchor="end" stroke="#d8d9da" stroke-width="0.3" >1.0</text>
<text x="953.0" y="474.5" font-size="12" fill="#d8d9da" text-anchor="end" stroke="#d8d9da" stroke-width="0.3" >0.5</text>
<text x="953.0" y="494.3" font-size="12" fill="#d8d9da" text-anchor="end" stroke="#d8d9da" stroke-width="0.3" >0</text>
<text x="953.0" y="513.7" font-size="12" fill="#d8d9da" text-anchor="end" stroke="#d8d9da" stroke-width="0.3" >-0.5</text>
<text x="953.0" y="533.9" font-size="12" fill="#d8d9da" text-anchor="end" stroke="#d8d9da" stroke-width="0.3" >-1.0</text>
<text x="1013.5" y="546.3" font-size="12" fill="#d8d9da" text-anchor="middle" textLength="28.8" lengthAdjust="spacingAndGlyphs" stroke="#d8d9da" stroke-width="0.3" >09:00</text>
<text x="1084.5" y="546.3" font-size="12" fill="#d8d9da" text-anchor="middle" textLength="28.8" lengthAdjust="spacingAndGlyphs" stroke="#d8d9da" stroke-width="0.3" >09:30</text>
<text x="1155.5" y="546.3" font-size="12" fill="#d8d9da" text-anchor="middle" textLength="28.8" lengthAdjust="spacingAndGlyphs" stroke="#d8d9da" stroke-width="0.3" >10:00</text>
<text x="1226.5" y="546.3" font-size="12" fill="#d8d9da" text-anchor="middle" textLength="28.8" lengthAdjust="spacingAndGlyphs" stroke="#d8d9da" stroke-width="0.3" >10:30</text>
<text x="1297.5" y="546.3" font-size="12" fill="#d8d9da" text-anchor="middle" textLength="28.8" lengthAdjust="spacingAndGlyphs" stroke="#d8d9da" stroke-width="0.3" >11:00</text>
<text x="1368.5" y="546.3" font-size="12" fill="#d8d9da" text-anchor="middle" textLength="28.8" lengthAdjust="spacingAndGlyphs" stroke="#d8d9da" stroke-width="0.3" >11:30</text>
<text x="1438.5" y="546.3" font-size="12" fill="#d8d9da" text-anchor="middle" textLength="28.8" lengthAdjust="spacingAndGlyphs" stroke="#d8d9da" stroke-width="0.3" >12:00</text>
<text x="1509.5" y="546.3" font-size="12" fill="#d8d9da" text-anchor="middle" textLength="28.8" lengthAdjust="spacingAndGlyphs" stroke="#d8d9da" stroke-width="0.3" >12:30</text>
<text x="1580.5" y="546.3" font-size="12" fill="#d8d9da" text-anchor="middle" textLength="28.8" lengthAdjust="spacingAndGlyphs" stroke="#d8d9da" stroke-width="0.3" >13:00</text>
<text x="1651.5" y="546.3" font-size="12" fill="#d8d9da" text-anchor="middle" textLength="28.8" lengthAdjust="spacingAndGlyphs" stroke="#d8d9da" stroke-width="0.3" >13:30</text>
<text x="1722.5" y="546.3" font-size="12" fill="#d8d9da" text-anchor="middle" textLength="28.8" lengthAdjust="spacingAndGlyphs" stroke="#d8d9da" stroke-width="0.3" >14:00</text>
<text x="1793.5" y="546.3" font-size="12" fill="#d8d9da" text-anchor="middle" textLength="28.8" lengthAdjust="spacingAndGlyphs" stroke="#d8d9da" stroke-width="0.3" >14:30</text>
<line x1="959.0" y1="490.0" x2="1808.5" y2="490.0" stroke="#d0302c" stroke-width="1.8" />
<line x1="970.5" y1="490.0" x2="1764.0" y2="490.0" stroke="#dba25c" stroke-width="1.8" />
<line x1="1724.5" y1="451.1" x2="1724.5" y2="529.6" stroke="#8e060c" stroke-width="1" />
<rect x="942.5" y="566.2" width="12.8" height="3.8" fill="#7eb26d" rx="1" />
<text x="960.0" y="572.1" font-size="12" fill="#d8d9da" textLength="71.0" lengthAdjust="spacingAndGlyphs" stroke="#d8d9da" stroke-width="0.3" >Caldaia A acc</text>
<text x="1038.0" y="572.1" font-size="12" fill="#d8d9da" textLength="51.0" lengthAdjust="spacingAndGlyphs" stroke="#d8d9da" stroke-width="0.3" >Current: 0</text>
<rect x="1099.0" y="566.2" width="12.8" height="3.8" fill="#eab839" rx="1" />
<text x="1116.0" y="572.1" font-size="12" fill="#d8d9da" textLength="72.0" lengthAdjust="spacingAndGlyphs" stroke="#d8d9da" stroke-width="0.3" >Caldaia B acc</text>
<text x="1194.0" y="572.1" font-size="12" fill="#d8d9da" textLength="51.0" lengthAdjust="spacingAndGlyphs" stroke="#d8d9da" stroke-width="0.3" >Current: 0</text>
<rect x="1255.0" y="566.2" width="12.8" height="3.8" fill="#6ed0e0" rx="1" />
<text x="1272.0" y="572.1" font-size="12" fill="#d8d9da" textLength="89.5" lengthAdjust="spacingAndGlyphs" stroke="#d8d9da" stroke-width="0.3" >Blocco Caldaia A</text>
<text x="1367.5" y="572.1" font-size="12" fill="#d8d9da" textLength="51.0" lengthAdjust="spacingAndGlyphs" stroke="#d8d9da" stroke-width="0.3" >Current: 0</text>
<rect x="1428.5" y="566.2" width="12.8" height="3.8" fill="#ef843c" rx="1" />
<text x="1446.0" y="572.1" font-size="12" fill="#d8d9da" textLength="87.0" lengthAdjust="spacingAndGlyphs" stroke="#d8d9da" stroke-width="0.3" >Blocco caldaia B</text>
<text x="1539.5" y="572.1" font-size="12" fill="#d8d9da" textLength="51.0" lengthAdjust="spacingAndGlyphs" stroke="#d8d9da" stroke-width="0.3" >Current: 0</text>
<text x="307.5" y="615.0" font-size="14" fill="#d8d9da" text-anchor="middle" font-weight="bold" textLength="106.0" lengthAdjust="spacingAndGlyphs" >P1 - BIBLIOTECA</text>
<line x1="44.0" y1="641.5" x2="573.0" y2="641.5" stroke="#444447" stroke-width="1" />
<line x1="44.0" y1="708.5" x2="573.0" y2="708.5" stroke="#444447" stroke-width="1" />
<line x1="44.0" y1="776.5" x2="573.0" y2="776.5" stroke="#444447" stroke-width="1" />
<line x1="44.0" y1="844.5" x2="573.0" y2="844.5" stroke="#444447" stroke-width="1" />
<line x1="44.0" y1="911.5" x2="573.0" y2="911.5" stroke="#444447" stroke-width="1" />
<line x1="78.5" y1="641.0" x2="78.5" y2="912.0" stroke="#444447" stroke-width="1" />
<line x1="166.5" y1="641.0" x2="166.5" y2="912.0" stroke="#444447" stroke-width="1" />
<line x1="254.5" y1="641.0" x2="254.5" y2="912.0" stroke="#444447" stroke-width="1" />
<line x1="342.5" y1="641.0" x2="342.5" y2="912.0" stroke="#444447" stroke-width="1" />
<line x1="430.5" y1="641.0" x2="430.5" y2="912.0" stroke="#444447" stroke-width="1" />
<line x1="519.5" y1="641.0" x2="519.5" y2="912.0" stroke="#444447" stroke-width="1" />
<text x="38.5" y="645.4" font-size="12" fill="#d8d9da" text-anchor="end" stroke="#d8d9da" stroke-width="0.3" >24.0</text>
<text x="38.5" y="712.5" font-size="12" fill="#d8d9da" text-anchor="end" stroke="#d8d9da" stroke-width="0.3" >23.5</text>
<text x="38.5" y="780.5" font-size="12" fill="#d8d9da" text-anchor="end" stroke="#d8d9da" stroke-width="0.3" >23.0</text>
<text x="38.5" y="848.3" font-size="12" fill="#d8d9da" text-anchor="end" stroke="#d8d9da" stroke-width="0.3" >22.5</text>
<text x="38.5" y="915.8" font-size="12" fill="#d8d9da" text-anchor="end" stroke="#d8d9da" stroke-width="0.3" >22.0</text>
<line x1="574.5" y1="640.5" x2="578.5" y2="640.5" stroke="#444447" stroke-width="1" />
<text x="584.7" y="645.2" font-size="12" fill="#d8d9da" stroke="#d8d9da" stroke-width="0.3" >1.0</text>
<line x1="574.5" y1="695.5" x2="578.5" y2="695.5" stroke="#444447" stroke-width="1" />
<text x="584.7" y="699.3" font-size="12" fill="#d8d9da" stroke="#d8d9da" stroke-width="0.3" >0.8</text>
<line x1="574.5" y1="749.5" x2="578.5" y2="749.5" stroke="#444447" stroke-width="1" />
<text x="584.7" y="753.4" font-size="12" fill="#d8d9da" stroke="#d8d9da" stroke-width="0.3" >0.6</text>
<line x1="574.5" y1="803.5" x2="578.5" y2="803.5" stroke="#444447" stroke-width="1" />
<text x="584.7" y="807.6" font-size="12" fill="#d8d9da" stroke="#d8d9da" stroke-width="0.3" >0.4</text>
<line x1="574.5" y1="857.5" x2="578.5" y2="857.5" stroke="#444447" stroke-width="1" />
<text x="584.7" y="861.7" font-size="12" fill="#d8d9da" stroke="#d8d9da" stroke-width="0.3" >0.2</text>
<line x1="574.5" y1="911.5" x2="578.5" y2="911.5" stroke="#444447" stroke-width="1" />
<text x="584.7" y="915.8" font-size="12" fill="#d8d9da" stroke="#d8d9da" stroke-width="0.3" >0</text>
<text x="78.5" y="929.3" font-size="12" fill="#d8d9da" text-anchor="middle" textLength="28.8" lengthAdjust="spacingAndGlyphs" stroke="#d8d9da" stroke-width="0.3" >09:00</text>
<text x="166.5" y="929.3" font-size="12" fill="#d8d9da" text-anchor="middle" textLength="28.8" lengthAdjust="spacingAndGlyphs" stroke="#d8d9da" stroke-width="0.3" >10:00</text>
<text x="254.5" y="929.3" font-size="12" fill="#d8d9da" text-anchor="middle" textLength="28.8" lengthAdjust="spacingAndGlyphs" stroke="#d8d9da" stroke-width="0.3" >11:00</text>
<text x="342.5" y="929.3" font-size="12" fill="#d8d9da" text-anchor="middle" textLength="28.8" lengthAdjust="spacingAndGlyphs" stroke="#d8d9da" stroke-width="0.3" >12:00</text>
<text x="430.5" y="929.3" font-size="12" fill="#d8d9da" text-anchor="middle" textLength="28.8" lengthAdjust="spacingAndGlyphs" stroke="#d8d9da" stroke-width="0.3" >13:00</text>
<text x="519.5" y="929.3" font-size="12" fill="#d8d9da" text-anchor="middle" textLength="28.8" lengthAdjust="spacingAndGlyphs" stroke="#d8d9da" stroke-width="0.3" >14:00</text>
<polyline points="44.0,866.9 49.0,864.1 63.7,857.4 78.4,843.9 93.1,830.3 107.8,810.0 122.4,803.3 137.1,789.7 151.8,783.0 166.5,776.2 181.2,769.4 195.9,769.4 210.6,762.7 225.2,762.7 239.9,762.7 254.6,762.7 269.3,749.1 284.0,749.1 298.6,742.4 313.3,735.6 328.0,735.6 342.7,735.6 357.4,728.8 372.1,722.1 386.8,722.1 401.4,722.1 416.1,728.8 430.8,735.6 445.5,728.8 460.2,728.8 474.9,735.6 489.5,735.6 504.2,735.6 518.9,735.6 533.6,735.6 548.3,735.6 562.9,735.6" fill="none" stroke="#6ed0e0" stroke-width="2" stroke-linejoin="round" />
<polyline points="49.0,857.4 63.7,850.6 78.4,830.3 93.1,789.7 107.8,783.0 122.4,762.7 137.1,742.4 151.8,735.6 166.5,728.8 181.2,722.1 195.9,715.3 210.6,708.5 225.2,708.5 239.9,701.8 254.6,695.0 269.3,688.3 284.0,688.3 298.6,681.5 313.3,681.5 328.0,668.0 342.7,668.0 357.4,674.7 372.1,668.0 386.8,654.4 401.4,661.2 416.1,668.0 430.8,681.5 445.5,688.3 460.2,688.3 474.9,688.3 489.5,695.0 504.2,695.0 518.9,695.0 533.6,695.0 548.3,695.0 562.9,688.3" fill="none" stroke="#eab839" stroke-width="2" stroke-linejoin="round" />
<line x1="44.0" y1="911.5" x2="570.0" y2="911.5" stroke="#7eb26d" stroke-width="2" />
<line x1="521.5" y1="640.0" x2="521.5" y2="912.0" stroke="#8e060c" stroke-width="1" />
<text x="586.0" y="951.8" font-size="12" fill="#33b5e5" text-anchor="end" font-weight="bold" textLength="38.0" lengthAdjust="spacingAndGlyphs" >current</text>
<text x="919.0" y="615.0" font-size="14" fill="#d8d9da" text-anchor="middle" font-weight="bold" textLength="109.0" lengthAdjust="spacingAndGlyphs" >P2 - SEGRETERIA</text>
<path d="M979 608.2 h8 l-4 4.4 z" fill="#8e8e8e"/>
<line x1="656.5" y1="641.5" x2="1185.5" y2="641.5" stroke="#444447" stroke-width="1" />
<line x1="656.5" y1="687.5" x2="1185.5" y2="687.5" stroke="#444447" stroke-width="1" />
<line x1="656.5" y1="733.5" x2="1185.5" y2="733.5" stroke="#444447" stroke-width="1" />
<line x1="656.5" y1="779.5" x2="1185.5" y2="779.5" stroke="#444447" stroke-width="1" />
<line x1="656.5" y1="825.5" x2="1185.5" y2="825.5" stroke="#444447" stroke-width="1" />
<line x1="656.5" y1="871.5" x2="1185.5" y2="871.5" stroke="#444447" stroke-width="1" />
<line x1="690.5" y1="641.0" x2="690.5" y2="872.0" stroke="#444447" stroke-width="1" />
<line x1="778.5" y1="641.0" x2="778.5" y2="872.0" stroke="#444447" stroke-width="1" />
<line x1="866.5" y1="641.0" x2="866.5" y2="872.0" stroke="#444447" stroke-width="1" />
<line x1="954.5" y1="641.0" x2="954.5" y2="872.0" stroke="#444447" stroke-width="1" />
<line x1="1042.5" y1="641.0" x2="1042.5" y2="872.0" stroke="#444447" stroke-width="1" />
<line x1="1131.5" y1="641.0" x2="1131.5" y2="872.0" stroke="#444447" stroke-width="1" />
<text x="651.2" y="645.5" font-size="12" fill="#d8d9da" text-anchor="end" stroke="#d8d9da" stroke-width="0.3" >25.0</text>
<text x="651.2" y="691.5" font-size="12" fill="#d8d9da" text-anchor="end" stroke="#d8d9da" stroke-width="0.3" >24.0</text>
<text x="651.2" y="737.5" font-size="12" fill="#d8d9da" text-anchor="end" stroke="#d8d9da" stroke-width="0.3" >23.0</text>
<text x="651.2" y="783.4" font-size="12" fill="#d8d9da" text-anchor="end" stroke="#d8d9da" stroke-width="0.3" >22.0</text>
<text x="651.2" y="829.4" font-size="12" fill="#d8d9da" text-anchor="end" stroke="#d8d9da" stroke-width="0.3" >21.0</text>
<text x="651.2" y="875.3" font-size="12" fill="#d8d9da" text-anchor="end" stroke="#d8d9da" stroke-width="0.3" >20.0</text>
<line x1="1187.0" y1="641.5" x2="1191.0" y2="641.5" stroke="#444447" stroke-width="1" />
<text x="1196.2" y="645.5" font-size="12" fill="#d8d9da" stroke="#d8d9da" stroke-width="0.3" >1.0</text>
<line x1="1187.0" y1="687.5" x2="1191.0" y2="687.5" stroke="#444447" stroke-width="1" />
<text x="1196.2" y="691.5" font-size="12" fill="#d8d9da" stroke="#d8d9da" stroke-width="0.3" >0.8</text>
<line x1="1187.0" y1="733.5" x2="1191.0" y2="733.5" stroke="#444447" stroke-width="1" />
<text x="1196.2" y="737.5" font-size="12" fill="#d8d9da" stroke="#d8d9da" stroke-width="0.3" >0.6</text>
<line x1="1187.0" y1="779.5" x2="1191.0" y2="779.5" stroke="#444447" stroke-width="1" />
<text x="1196.2" y="783.4" font-size="12" fill="#d8d9da" stroke="#d8d9da" stroke-width="0.3" >0.4</text>
<line x1="1187.0" y1="825.5" x2="1191.0" y2="825.5" stroke="#444447" stroke-width="1" />
<text x="1196.2" y="829.4" font-size="12" fill="#d8d9da" stroke="#d8d9da" stroke-width="0.3" >0.2</text>
<line x1="1187.0" y1="871.5" x2="1191.0" y2="871.5" stroke="#444447" stroke-width="1" />
<text x="1196.2" y="875.3" font-size="12" fill="#d8d9da" stroke="#d8d9da" stroke-width="0.3" >0</text>
<text x="690.5" y="888.6" font-size="12" fill="#d8d9da" text-anchor="middle" textLength="28.8" lengthAdjust="spacingAndGlyphs" stroke="#d8d9da" stroke-width="0.3" >09:00</text>
<text x="778.5" y="888.6" font-size="12" fill="#d8d9da" text-anchor="middle" textLength="28.8" lengthAdjust="spacingAndGlyphs" stroke="#d8d9da" stroke-width="0.3" >10:00</text>
<text x="866.5" y="888.6" font-size="12" fill="#d8d9da" text-anchor="middle" textLength="28.8" lengthAdjust="spacingAndGlyphs" stroke="#d8d9da" stroke-width="0.3" >11:00</text>
<text x="954.5" y="888.6" font-size="12" fill="#d8d9da" text-anchor="middle" textLength="28.8" lengthAdjust="spacingAndGlyphs" stroke="#d8d9da" stroke-width="0.3" >12:00</text>
<text x="1042.5" y="888.6" font-size="12" fill="#d8d9da" text-anchor="middle" textLength="28.8" lengthAdjust="spacingAndGlyphs" stroke="#d8d9da" stroke-width="0.3" >13:00</text>
<text x="1131.5" y="888.6" font-size="12" fill="#d8d9da" text-anchor="middle" textLength="28.8" lengthAdjust="spacingAndGlyphs" stroke="#d8d9da" stroke-width="0.3" >14:00</text>
<line x1="656.5" y1="871.0" x2="1200.0" y2="871.0" stroke="#7eb26d" stroke-width="2" />
<polyline points="661.1,765.3 675.8,765.3 690.5,758.4 705.2,753.8 719.9,751.5 734.6,756.1 749.3,753.8 763.9,744.6 778.6,744.6 793.3,740.0 808.0,735.4 822.7,733.1 837.4,728.5 852.1,726.2 866.8,723.9 881.4,721.6 896.1,719.3 910.8,721.6 925.5,719.3 940.2,719.3 954.9,719.3 969.6,714.7 984.3,714.7 999.0,714.7 1013.6,710.1 1028.3,707.8 1043.0,707.8 1057.7,703.2 1072.4,705.5 1087.1,705.5 1101.8,703.2 1116.5,705.5 1131.1,703.2 1145.8,700.9 1160.5,700.9 1175.2,698.6" fill="none" stroke="#eab839" stroke-width="2" stroke-linejoin="round" />
<polyline points="656.5,759.3 661.1,758.4 675.8,763.0 690.5,756.1 705.2,753.8 719.9,746.9 734.6,742.3 749.3,742.3 763.9,740.0 778.6,742.3 793.3,737.7 808.0,735.4 822.7,733.1 837.4,733.1 852.1,730.8 866.8,733.1 881.4,730.8 896.1,726.2 910.8,723.9 925.5,714.7 940.2,714.7 954.9,710.1 969.6,710.1 984.3,705.5 999.0,705.5 1013.6,700.9 1028.3,698.6 1043.0,696.4 1057.7,698.6 1072.4,696.4 1087.1,694.1 1101.8,691.8 1116.5,696.4 1131.1,696.4 1145.8,696.4 1160.5,698.6 1175.2,696.4" fill="none" stroke="#6ed0e0" stroke-width="2" stroke-linejoin="round" />
<polyline points="661.1,703.2 675.8,705.5 690.5,705.5 705.2,705.5 719.9,705.5 734.6,700.9 749.3,700.9 763.9,696.4 778.6,694.1 793.3,691.8 808.0,691.8 822.7,691.8 837.4,691.8 852.1,691.8 866.8,694.1 881.4,691.8 896.1,691.8 910.8,691.8 925.5,691.8 940.2,691.8 954.9,689.5 969.6,689.5 984.3,687.2 999.0,687.2 1013.6,687.2 1028.3,684.9 1043.0,682.6 1057.7,682.6 1072.4,682.6 1087.1,682.6 1101.8,682.6 1116.5,680.3 1131.1,682.6 1145.8,678.0 1160.5,678.0 1175.2,678.0" fill="none" stroke="#ef843c" stroke-width="2" stroke-linejoin="round" />
<polyline points="656.5,825.0 661.1,822.7 675.8,820.4 690.5,815.8 705.2,813.5 719.9,815.8 734.6,811.3 749.3,811.3 763.9,806.7 778.6,804.4 793.3,804.4 808.0,802.1 822.7,802.1 837.4,797.5 852.1,797.5 866.8,795.2 881.4,790.6 896.1,788.3 910.8,786.0 925.5,783.7 940.2,786.0 954.9,783.7 969.6,781.4 984.3,779.1 999.0,779.1 1013.6,779.1 1028.3,779.1 1043.0,779.1 1057.7,779.1 1072.4,779.1 1087.1,781.4 1101.8,781.4 1116.5,783.7 1131.1,781.4 1145.8,779.1 1160.5,783.7 1175.2,783.7" fill="none" stroke="#e24d42" stroke-width="2" stroke-linejoin="round" />
<line x1="1133.5" y1="641.0" x2="1133.5" y2="871.0" stroke="#8e060c" stroke-width="1" />
<circle cx="1130.5" cy="682.6" r="3" fill="#ef843c" fill-opacity="0.35" stroke="#ef843c" stroke-opacity="0.7" stroke-width="1"/>
<circle cx="1130.5" cy="696.4" r="3" fill="#6ed0e0" fill-opacity="0.35" stroke="#6ed0e0" stroke-opacity="0.7" stroke-width="1"/>
<circle cx="1130.5" cy="703.2" r="3" fill="#eab839" fill-opacity="0.35" stroke="#eab839" stroke-opacity="0.7" stroke-width="1"/>
<circle cx="1130.5" cy="781.4" r="3" fill="#e24d42" fill-opacity="0.35" stroke="#e24d42" stroke-opacity="0.7" stroke-width="1"/>
<circle cx="1123.5" cy="871" r="3" fill="none" stroke="#6a8f5e" stroke-width="1.2"/>
<rect x="632.3" y="917.5" width="573.7" height="23.9" fill="#262628" />
<rect x="641.6" y="929.0" width="13.2" height="3.8" fill="#7eb26d" rx="1" />
<text x="661.5" y="933.3" font-size="12" fill="#d8d9da" textLength="104.0" lengthAdjust="spacingAndGlyphs" stroke="#d8d9da" stroke-width="0.3" >modbusMandata3S</text>
<text x="771.0" y="933.3" font-size="12" fill="#8e8e8e" textLength="40.5" lengthAdjust="spacingAndGlyphs" stroke="#8e8e8e" stroke-width="0.3" >(right-y)</text>
<rect x="641.6" y="953.7" width="13.2" height="3.8" fill="#eab839" rx="1" />
<text x="661.5" y="958.0" font-size="12" fill="#d8d9da" textLength="49.8" lengthAdjust="spacingAndGlyphs" stroke="#d8d9da" stroke-width="0.3" >t15.mean</text>
<text x="1198.2" y="958.0" font-size="12" fill="#d8d9da" text-anchor="end" stroke="#d8d9da" stroke-width="0.3" >23.75</text>
<rect x="1207.0" y="941.4" width="6.0" height="19.6" fill="#4a4a5c" />
<text x="1531.5" y="615.0" font-size="14" fill="#d8d9da" text-anchor="middle" font-weight="bold" textLength="155.0" lengthAdjust="spacingAndGlyphs" >P3 - PALESTRA E ALPINI</text>
<line x1="1267.2" y1="641.5" x2="1797.3" y2="641.5" stroke="#444447" stroke-width="1" />
<line x1="1267.2" y1="695.5" x2="1797.3" y2="695.5" stroke="#444447" stroke-width="1" />
<line x1="1267.2" y1="749.5" x2="1797.3" y2="749.5" stroke="#444447" stroke-width="1" />
<line x1="1267.2" y1="803.5" x2="1797.3" y2="803.5" stroke="#444447" stroke-width="1" />
<line x1="1267.2" y1="857.5" x2="1797.3" y2="857.5" stroke="#444447" stroke-width="1" />
<line x1="1267.2" y1="911.5" x2="1797.3" y2="911.5" stroke="#444447" stroke-width="1" />
<line x1="1302.5" y1="641.0" x2="1302.5" y2="912.0" stroke="#444447" stroke-width="1" />
<line x1="1390.5" y1="641.0" x2="1390.5" y2="912.0" stroke="#444447" stroke-width="1" />
<line x1="1478.5" y1="641.0" x2="1478.5" y2="912.0" stroke="#444447" stroke-width="1" />
<line x1="1566.5" y1="641.0" x2="1566.5" y2="912.0" stroke="#444447" stroke-width="1" />
<line x1="1654.5" y1="641.0" x2="1654.5" y2="912.0" stroke="#444447" stroke-width="1" />
<line x1="1743.5" y1="641.0" x2="1743.5" y2="912.0" stroke="#444447" stroke-width="1" />
<text x="1262.0" y="645.7" font-size="12" fill="#d8d9da" text-anchor="end" stroke="#d8d9da" stroke-width="0.3" >25.0</text>
<text x="1262.0" y="699.8" font-size="12" fill="#d8d9da" text-anchor="end" stroke="#d8d9da" stroke-width="0.3" >24.5</text>
<text x="1262.0" y="753.9" font-size="12" fill="#d8d9da" text-anchor="end" stroke="#d8d9da" stroke-width="0.3" >24.0</text>
<text x="1262.0" y="808.0" font-size="12" fill="#d8d9da" text-anchor="end" stroke="#d8d9da" stroke-width="0.3" >23.5</text>
<text x="1262.0" y="862.1" font-size="12" fill="#d8d9da" text-anchor="end" stroke="#d8d9da" stroke-width="0.3" >23.0</text>
<text x="1262.0" y="916.2" font-size="12" fill="#d8d9da" text-anchor="end" stroke="#d8d9da" stroke-width="0.3" >22.5</text>
<line x1="1798.8" y1="641.5" x2="1802.8" y2="641.5" stroke="#444447" stroke-width="1" />
<text x="1808.6" y="645.7" font-size="12" fill="#d8d9da" stroke="#d8d9da" stroke-width="0.3" >1.0</text>
<line x1="1798.8" y1="695.5" x2="1802.8" y2="695.5" stroke="#444447" stroke-width="1" />
<text x="1808.6" y="699.8" font-size="12" fill="#d8d9da" stroke="#d8d9da" stroke-width="0.3" >0.8</text>
<line x1="1798.8" y1="749.5" x2="1802.8" y2="749.5" stroke="#444447" stroke-width="1" />
<text x="1808.6" y="753.9" font-size="12" fill="#d8d9da" stroke="#d8d9da" stroke-width="0.3" >0.6</text>
<line x1="1798.8" y1="803.5" x2="1802.8" y2="803.5" stroke="#444447" stroke-width="1" />
<text x="1808.6" y="808.0" font-size="12" fill="#d8d9da" stroke="#d8d9da" stroke-width="0.3" >0.4</text>
<line x1="1798.8" y1="857.5" x2="1802.8" y2="857.5" stroke="#444447" stroke-width="1" />
<text x="1808.6" y="862.1" font-size="12" fill="#d8d9da" stroke="#d8d9da" stroke-width="0.3" >0.2</text>
<line x1="1798.8" y1="911.5" x2="1802.8" y2="911.5" stroke="#444447" stroke-width="1" />
<text x="1808.6" y="916.2" font-size="12" fill="#d8d9da" stroke="#d8d9da" stroke-width="0.3" >0</text>
<text x="1302.5" y="929.5" font-size="12" fill="#d8d9da" text-anchor="middle" textLength="28.8" lengthAdjust="spacingAndGlyphs" stroke="#d8d9da" stroke-width="0.3" >09:00</text>
<text x="1390.5" y="929.5" font-size="12" fill="#d8d9da" text-anchor="middle" textLength="28.8" lengthAdjust="spacingAndGlyphs" stroke="#d8d9da" stroke-width="0.3" >10:00</text>
<text x="1478.5" y="929.5" font-size="12" fill="#d8d9da" text-anchor="middle" textLength="28.8" lengthAdjust="spacingAndGlyphs" stroke="#d8d9da" stroke-width="0.3" >11:00</text>
<text x="1566.5" y="929.5" font-size="12" fill="#d8d9da" text-anchor="middle" textLength="28.8" lengthAdjust="spacingAndGlyphs" stroke="#d8d9da" stroke-width="0.3" >12:00</text>
<text x="1654.5" y="929.5" font-size="12" fill="#d8d9da" text-anchor="middle" textLength="28.8" lengthAdjust="spacingAndGlyphs" stroke="#d8d9da" stroke-width="0.3" >13:00</text>
<text x="1743.5" y="929.5" font-size="12" fill="#d8d9da" text-anchor="middle" textLength="28.8" lengthAdjust="spacingAndGlyphs" stroke="#d8d9da" stroke-width="0.3" >14:00</text>
<polyline points="1273.2,836.2 1287.9,836.2 1302.6,836.2 1317.3,836.2 1331.9,836.2 1346.6,836.2 1361.3,836.2 1376.0,836.2 1390.6,830.8 1405.3,825.3 1420.0,825.3 1434.7,819.9 1449.3,819.9 1464.0,819.9 1478.7,814.5 1493.4,814.5 1508.0,809.1 1522.7,809.1 1537.4,803.7 1552.1,803.7 1566.8,803.7 1581.4,803.7 1596.1,803.7 1610.8,792.9 1625.4,792.9 1640.1,787.5 1654.8,782.1 1669.5,782.1 1684.1,776.6 1698.8,776.6 1713.5,771.2 1728.2,771.2 1742.8,771.2 1757.5,771.2 1772.2,760.4 1786.9,760.4" fill="none" stroke="#eab839" stroke-width="2" stroke-linejoin="round" />
<polyline points="1376.0,738.8 1552.1,717.1 1742.8,663.0" fill="none" stroke="#6ed0e0" stroke-width="2" stroke-linejoin="round" />
<line x1="1267.2" y1="911.9" x2="1794.5" y2="911.9" stroke="#7eb26d" stroke-width="2" />
<line x1="1744.5" y1="641.0" x2="1744.5" y2="912.0" stroke="#8e060c" stroke-width="1" />
<text x="1809.3" y="952.3" font-size="12" fill="#33b5e5" text-anchor="end" font-weight="bold" textLength="38.0" lengthAdjust="spacingAndGlyphs" >current</text>
<rect x="1158.2" y="813.2" width="189.6" height="127.3" fill="#141414" rx="4" />
<text x="1253.0" y="833.3" font-size="12" fill="#e8e8e8" text-anchor="middle" font-weight="bold" textLength="136.3" lengthAdjust="spacingAndGlyphs" >2021-09-02 14:00:00.000</text>
<rect x="1170.0" y="848.4" width="9.3" height="3.6" fill="#eab839" rx="1" />
<text x="1182.4" y="854.3" font-size="12" fill="#e8e8e8" textLength="53.5" lengthAdjust="spacingAndGlyphs" stroke="#e8e8e8" stroke-width="0.3" >t15.mean:</text>
<text x="1337.9" y="854.3" font-size="12" fill="#e8e8e8" text-anchor="end" font-weight="bold" >23.65</text>
<rect x="1170.0" y="866.3" width="9.3" height="3.6" fill="#6ed0e0" rx="1" />
<text x="1182.4" y="872.2" font-size="12" fill="#e8e8e8" textLength="53.5" lengthAdjust="spacingAndGlyphs" stroke="#e8e8e8" stroke-width="0.3" >t16.mean:</text>
<text x="1337.9" y="872.2" font-size="12" fill="#e8e8e8" text-anchor="end" font-weight="bold" >23.80</text>
<rect x="1170.0" y="884.3" width="9.3" height="3.6" fill="#ef843c" rx="1" />
<text x="1182.4" y="890.2" font-size="12" fill="#e8e8e8" textLength="53.5" lengthAdjust="spacingAndGlyphs" stroke="#e8e8e8" stroke-width="0.3" >t17.mean:</text>
<text x="1337.9" y="890.2" font-size="12" fill="#e8e8e8" text-anchor="end" font-weight="bold" >24.10</text>
<rect x="1170.0" y="902.3" width="9.3" height="3.6" fill="#e24d42" rx="1" />
<text x="1182.4" y="908.2" font-size="12" fill="#e8e8e8" font-weight="bold" textLength="54.5" lengthAdjust="spacingAndGlyphs" >t07.mean:</text>
<text x="1337.9" y="908.2" font-size="12" fill="#e8e8e8" text-anchor="end" font-weight="bold" >21.95</text>
<rect x="1170.0" y="920.3" width="9.3" height="3.6" fill="#7eb26d" rx="1" />
<text x="1182.4" y="926.2" font-size="12" fill="#e8e8e8" textLength="108.0" lengthAdjust="spacingAndGlyphs" stroke="#e8e8e8" stroke-width="0.3" >modbusMandata3S:</text>
<text x="1337.9" y="926.2" font-size="12" fill="#e8e8e8" text-anchor="end" font-weight="bold" >0</text>
</svg></body></html>
